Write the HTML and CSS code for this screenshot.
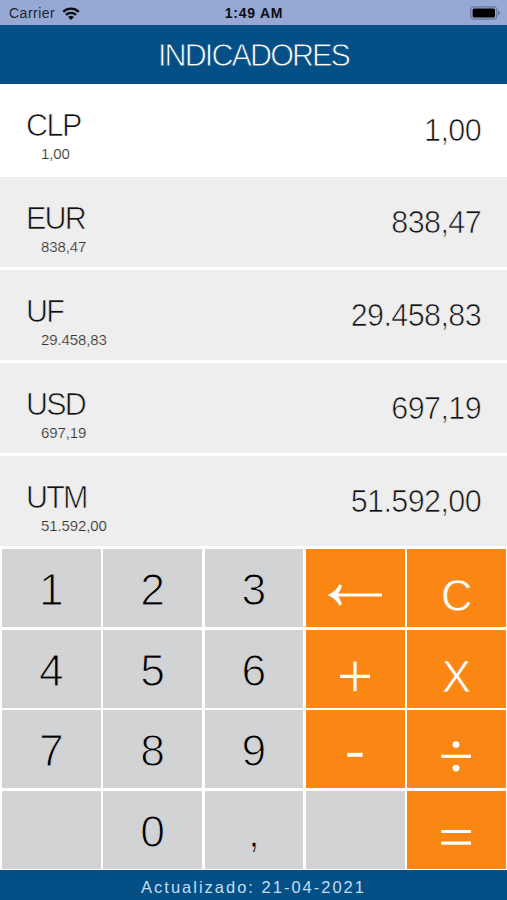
FILE: index.html
```
<!DOCTYPE html>
<html lang="es">

<head>
    <meta charset="UTF-8" />
    <meta name="viewport" content="width=device-width, initial-scale=1.0" />
    <title>Indicadores</title>
    <link rel="stylesheet" href="styles.css">
</head>

<body>
    <div class="app">
        <div class="status">
            <div class="status-left">
                <span>Carrier</span>
                <svg class="wifi" viewBox="0 0 18 13">
                    <path d="M1.2 4.8 A11.3 11.3 0 0 1 16.8 4.8" />
                    <path d="M4 7.8 A7.2 7.2 0 0 1 14 7.8" />
                    <path class="dot" d="M9 13 L6.1 10.1 A4.2 4.2 0 0 1 11.9 10.1 Z" />
                </svg>
            </div>
            <div class="status-time">1:49 AM</div>
            <div class="status-right">
                <svg class="battery" viewBox="0 0 31 14">
                    <rect class="case" x="0.8" y="0.8" width="26" height="12.4" rx="3.2" />
                    <rect x="2.6" y="2.6" width="22.4" height="8.8" rx="1.5" />
                    <path class="tip" d="M28 4.6 Q30 5.6 30 7 Q30 8.4 28 9.4 Z" />
                </svg>
            </div>
        </div>
        <h1 class="title">INDICADORES</h1>
        <ul class="list">
            <li class="current">
                <div class="money">
                    <p class="name">CLP</p>
                    <p class="rate">1,00</p>
                </div>
                <div class="value">1,00</div>
            </li>
            <li>
                <div class="money">
                    <p class="name">EUR</p>
                    <p class="rate">838,47</p>
                </div>
                <div class="value">838,47</div>
            </li>
            <li>
                <div class="money">
                    <p class="name">UF</p>
                    <p class="rate">29.458,83</p>
                </div>
                <div class="value">29.458,83</div>
            </li>
            <li>
                <div class="money">
                    <p class="name">USD</p>
                    <p class="rate">697,19</p>
                </div>
                <div class="value">697,19</div>
            </li>
            <li>
                <div class="money">
                    <p class="name">UTM</p>
                    <p class="rate">51.592,00</p>
                </div>
                <div class="value">51.592,00</div>
            </li>
        </ul>
        <div class="keys">
            <div class="key">1</div>
            <div class="key">2</div>
            <div class="key">3</div>
            <div class="key op">
                <svg viewBox="0 0 98 78">
                    <path d="M28 46 H76" />
                    <path class="fill" d="M21.5 46 Q30 42.5 33.5 35.3 L36 36.8 Q34.5 42 31 46 Q34.5 50 36 55.2 L33.5 56.7 Q30 49.5 21.5 46 Z" />
                </svg>
            </div>
            <div class="key op letter">C</div>
            <div class="key">4</div>
            <div class="key">5</div>
            <div class="key">6</div>
            <div class="key op">
                <svg viewBox="0 0 98 78">
                    <path d="M34 46.3 H64 M49 31.5 V61.2" />
                </svg>
            </div>
            <div class="key op letter">X</div>
            <div class="key">7</div>
            <div class="key">8</div>
            <div class="key">9</div>
            <div class="key op">
                <svg viewBox="0 0 98 78">
                    <path class="minus" d="M41.2 44.8 H56.6" />
                </svg>
            </div>
            <div class="key op">
                <svg viewBox="0 0 98 78">
                    <path d="M34.2 46.3 H64" />
                    <circle cx="49" cy="34.6" r="3.4" />
                    <circle cx="49" cy="58.1" r="3.4" />
                </svg>
            </div>
            <div class="key"></div>
            <div class="key">0</div>
            <div class="key">,</div>
            <div class="key"></div>
            <div class="key op">
                <svg viewBox="0 0 98 78">
                    <path d="M34.2 40.5 H64 M34.2 52.2 H64" />
                </svg>
            </div>
        </div>
        <div class="footer">Actualizado: 21-04-2021</div>
    </div>
</body>

</html>
```
FILE: styles.css
```
* {
    margin: 0;
    padding: 0;
    box-sizing: border-box;
}

body {
    font-family: "Liberation Sans", Arial, sans-serif;
    background-color: #fff;
    color: #111;
}

.app {
    display: flex;
    flex-direction: column;
    width: 507px;
    height: 900px;
    overflow: hidden;
}

.status {
    display: grid;
    grid-template-columns: 1fr auto 1fr;
    align-items: center;
    height: 25px;
    padding: 2px 6px 0 7px;
    background-color: #95a9d4;
    font-size: 14px;
    line-height: 23px;
}

.status-left {
    display: flex;
    align-items: center;
    gap: 7px;
    padding-left: 2px;
    color: #20252f;
    letter-spacing: 0.5px;
}

.status-time {
    color: #0b0d12;
    font-weight: bold;
    letter-spacing: 0.75px;
}

.status-right {
    display: flex;
    justify-content: flex-end;
    padding-bottom: 2px;
}

.wifi {
    width: 18px;
    height: 13px;
    margin-bottom: 1px;
    fill: none;
    stroke: #0b0d12;
    stroke-width: 2.3;
}

.wifi .dot {
    fill: #0b0d12;
    stroke: none;
}

.battery {
    width: 31px;
    height: 14px;
}

.battery .case {
    fill: none;
    stroke: #66749a;
    stroke-width: 1.2;
}

.battery .tip {
    fill: #66749a;
}

.title {
    height: 59px;
    background-color: #045086;
    color: #fff;
    text-align: center;
    font-size: 30.5px;
    font-weight: normal;
    line-height: 60px;
    letter-spacing: -1.9px;
    /* thins the letters down to a light weight */
    -webkit-text-stroke: 0.8px #045086;
}

.list {
    height: 465px;
    list-style-type: none;
}

.list li {
    display: flex;
    justify-content: space-between;
    height: 93px;
    padding: 23px 26px 0 26px;
    background-color: #eee;
    border-bottom: 3px solid #fff;
    -webkit-text-stroke: 0.7px #eee;
}

.list .current {
    background-color: #fff;
    border-bottom: none;
    -webkit-text-stroke-color: #fff;
}

.name {
    font-size: 30.5px;
    line-height: 36px;
    letter-spacing: -1.8px;
}

.list .current .name {
    letter-spacing: -1.5px;
}

.rate {
    padding-left: 15px;
    font-size: 15px;
    line-height: 22px;
    letter-spacing: -0.1px;
    color: #333;
    -webkit-text-stroke-width: 0.2px;
}

.value {
    padding-top: 4px;
    font-size: 30.5px;
    line-height: 36px;
    letter-spacing: -0.6px;
}

.list .current .value {
    padding-top: 5px;
}

.keys {
    display: grid;
    grid-template-columns: repeat(5, 1fr);
    grid-template-rows: repeat(4, minmax(0, 1fr));
    gap: 2.4px 2.6px;
    height: 321px;
    padding: 0 1px 1px 2px;
}

.key {
    background-color: #d2d3d5;
    color: #000;
    text-align: center;
    font-size: 44.5px;
    line-height: 82px;
    -webkit-text-stroke: 1.2px #d2d3d5;
}

.op {
    background-color: #fa8714;
    color: #fff;
    -webkit-text-stroke: 0.6px #fa8714;
}

.letter {
    padding-top: 6px;
    font-size: 43.5px;
}

.op svg {
    display: block;
    width: 98px;
    height: 78px;
    fill: none;
    stroke: #fff;
    stroke-width: 3.2;
}

.op .minus {
    stroke-width: 4;
}

.op .fill,
.op circle {
    fill: #fff;
    stroke: none;
}

.footer {
    flex: 1;
    background-color: #045086;
    color: #c5dcf2;
    text-align: center;
    font-size: 16.5px;
    line-height: 34px;
    letter-spacing: 2px;
}
```
